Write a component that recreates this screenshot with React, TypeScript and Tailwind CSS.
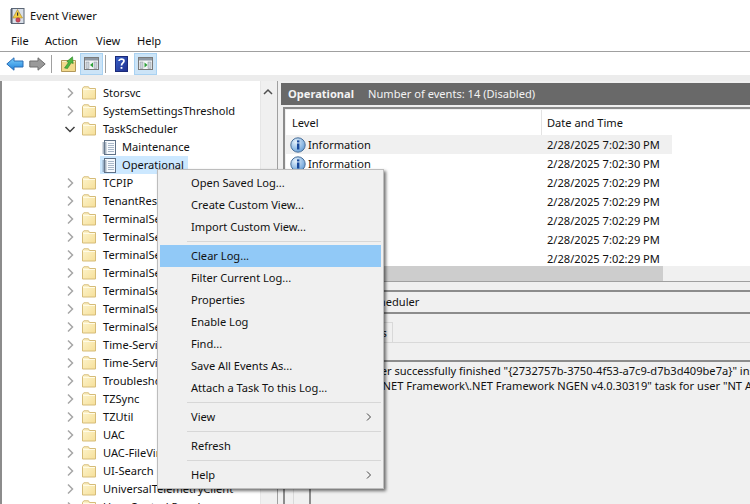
import React from "react";

const Folder = () => (
  <svg width="14" height="14" viewBox="0 0 14 14" className="shrink-0">
    <defs>
      <linearGradient id="fg" x1="0" y1="0" x2="1" y2="1">
        <stop offset="0" stopColor="#fdf5cf" />
        <stop offset="1" stopColor="#f6df98" />
      </linearGradient>
    </defs>
    <path d="M.5 2.5 V13 H13.5 V2.5 H7.5 L6.5 .8 H1.8 L.5 2.5Z" fill="url(#fg)" stroke="#d6bc78" strokeWidth="1" />
    <path d="M1 3.5 H13" stroke="#fffbe6" strokeWidth="1" />
  </svg>
);

const LogIcon = () => (
  <svg width="15" height="15" viewBox="0 0 15 15" className="shrink-0">
    <rect x="2.5" y=".5" width="11" height="14" fill="#f7fafd" stroke="#5f7187" />
    {[3, 5, 7, 9, 11, 13].map((y) => (
      <path key={y} d={`M.5 ${y} H4.5`} stroke="#6c7f94" strokeWidth="1.1" />
    ))}
    {[3, 5, 7, 9, 11].map((y) => (
      <path key={y} d={`M6 ${y + 0.5} H12`} stroke="#a9b8c9" strokeWidth="1" />
    ))}
  </svg>
);

const Info = () => (
  <svg width="16" height="16" viewBox="0 0 16 16" className="shrink-0">
    <defs>
      <radialGradient id="ig" cx="0.35" cy="0.3" r="0.9">
        <stop offset="0" stopColor="#e6f2fc" />
        <stop offset="1" stopColor="#4d8fd0" />
      </radialGradient>
    </defs>
    <circle cx="8" cy="8" r="7.2" fill="url(#ig)" stroke="#4a6f99" />
    <rect x="7" y="6.5" width="2.4" height="6" fill="#17479a" />
    <rect x="7" y="3.4" width="2.4" height="2" fill="#17479a" />
  </svg>
);

const ChevronRight = () => (
  <svg width="12" height="12" viewBox="0 0 12 12" className="shrink-0">
    <path d="M4 1.5 L8.5 6 L4 10.5" fill="none" stroke="#a6a6a6" strokeWidth="1.5" />
  </svg>
);

const MenuChevron = () => (
  <svg width="12" height="12" viewBox="0 0 12 12" className="shrink-0">
    <path d="M4 2.5 L7.5 6 L4 9.5" fill="none" stroke="#444" strokeWidth="1" />
  </svg>
);

const ChevronDown = () => (
  <svg width="12" height="12" viewBox="0 0 12 12" className="shrink-0">
    <path d="M1.5 4 L6 8.5 L10.5 4" fill="none" stroke="#404040" strokeWidth="1.5" />
  </svg>
);

const AppIcon = () => (
  <svg width="15" height="16" viewBox="0 0 15 16" className="shrink-0">
    <rect x="1.5" y=".5" width="12.5" height="15" fill="#d9dfe8" stroke="#5b6675" />
    {[2, 4, 6, 8, 10, 12, 14].map((y) => (
      <path key={y} d={`M0 ${y} H3`} stroke="#50596a" />
    ))}
    <path d="M7.5 1.5 L12.5 10 H2.8Z" fill="#f5cf45" stroke="#a8842a" strokeWidth=".6" />
    <rect x="7" y="4.5" width="1.2" height="3.2" fill="#333" />
    <circle cx="8" cy="12" r="2.2" fill="#d04a5a" stroke="#8c2b38" strokeWidth=".5" />
  </svg>
);

const BackArrow = () => (
  <svg width="18" height="14" viewBox="0 0 18 14">
    <defs>
      <linearGradient id="ba" x1="0" y1="0" x2="0" y2="1">
        <stop offset="0" stopColor="#7fd0fb" />
        <stop offset="1" stopColor="#1c7fdb" />
      </linearGradient>
    </defs>
    <path d="M.8 7 L8 .8 V4 H17 V10 H8 V13.2Z" fill="url(#ba)" stroke="#2a6cb5" />
  </svg>
);

const ForwardArrow = () => (
  <svg width="17" height="14" viewBox="0 0 17 14">
    <path d="M16.2 7 L9 .8 V4 H.8 V10 H9 V13.2Z" fill="#9a9a9a" stroke="#6f6f6f" />
  </svg>
);

const UpFolder = () => (
  <svg width="15" height="16" viewBox="0 0 15 16">
    <path d="M.5 4.5 H14.5 V15.5 H.5Z" fill="#f2d98c" stroke="#b2985a" />
    <path d="M1 5.5 H14" stroke="#fbf0c4" />
    <path d="M3.5 12 L7.5 6.5 L5.8 5.5 L11.5 .8 L12.2 7.5 L10.2 6.8 L6.5 12.5Z" fill="#4cb53f" stroke="#2d8327" strokeWidth=".6" />
  </svg>
);

const PaneIcon = ({ right }: { right?: boolean }) => (
  <svg width="15" height="13" viewBox="0 0 15 13">
    <rect x=".5" y=".5" width="14" height="12" fill="#f5f7f9" stroke="#7a7a7a" />
    <rect x="1" y="1" width="13" height="2.5" fill="#8e98a3" />
    <rect x="2" y="5" width="3" height="6.5" fill="#ccd3da" stroke="#8b949d" strokeWidth=".5" />
    <rect x="10" y="5" width="3" height="6.5" fill="#ccd3da" stroke="#8b949d" strokeWidth=".5" />
    {right ? <path d="M6.5 5.5 L9.5 8 L6.5 10.5Z" fill="#2fa13a" /> : <path d="M9 5.5 L6 8 L9 10.5Z" fill="#2fa13a" />}
  </svg>
);

const HelpIcon = () => (
  <svg width="13" height="16" viewBox="0 0 13 16">
    <defs>
      <linearGradient id="hg" x1="0" y1="0" x2="1" y2="1">
        <stop offset="0" stopColor="#3a62c9" />
        <stop offset="1" stopColor="#1f2f8e" />
      </linearGradient>
    </defs>
    <rect x=".5" y=".5" width="12" height="15" fill="url(#hg)" stroke="#1b2a78" />
    <path d="M4 5 C4 2.5 9 2.5 9 5 C9 7 6.5 7 6.5 9.5" fill="none" stroke="#fff" strokeWidth="1.7" />
    <rect x="5.6" y="11" width="1.8" height="1.8" fill="#fff" />
  </svg>
);

type Node = { label: string; kind?: "open" | "log" | "selected" };

const nodes: Node[] = [
  { label: "Storsvc" },
  { label: "SystemSettingsThreshold" },
  { label: "TaskScheduler", kind: "open" },
  { label: "Maintenance", kind: "log" },
  { label: "Operational", kind: "selected" },
  { label: "TCPIP" },
  { label: "TenantRestrictions" },
  { label: "TerminalServices-ClientUSBDevices" },
  { label: "TerminalServices-LocalSessionManager" },
  { label: "TerminalServices-PnPDevices" },
  { label: "TerminalServices-Printers" },
  { label: "TerminalServices-RemoteConnectionManager" },
  { label: "TerminalServices-ServerUSBDevices" },
  { label: "TerminalServices-SessionBroker" },
  { label: "Time-Service" },
  { label: "Time-Service-PTP-Provider" },
  { label: "Troubleshooting-Recommended" },
  { label: "TZSync" },
  { label: "TZUtil" },
  { label: "UAC" },
  { label: "UAC-FileVirtualization" },
  { label: "UI-Search" },
  { label: "UniversalTelemetryClient" },
  { label: "User Control Panel" },
];

const TreeRow = ({ node }: { node: Node }) => {
  if (node.kind === "log" || node.kind === "selected") {
    return (
      <div className="h-[18px] flex items-center pl-[98px]">
        <div className={`h-[18px] flex items-center pl-[2px] pr-[4px] ${node.kind === "selected" ? "bg-[#cce8ff]" : ""}`}>
          <LogIcon />
          <span className="ml-[5px]">{node.label}</span>
        </div>
      </div>
    );
  }
  return (
    <div className="h-[18px] flex items-center pl-[62px]">
      {node.kind === "open" ? <ChevronDown /> : <ChevronRight />}
      <div className="ml-[6px]"><Folder /></div>
      <span className="ml-[7px]">{node.label}</span>
    </div>
  );
};

const rows = [
  "2/28/2025 7:02:30 PM",
  "2/28/2025 7:02:30 PM",
  "2/28/2025 7:02:29 PM",
  "2/28/2025 7:02:29 PM",
  "2/28/2025 7:02:29 PM",
  "2/28/2025 7:02:29 PM",
  "2/28/2025 7:02:29 PM",
];

type MenuEntry = { label?: string; sub?: boolean; active?: boolean };

const menu: MenuEntry[] = [
  { label: "Open Saved Log..." },
  { label: "Create Custom View..." },
  { label: "Import Custom View..." },
  {},
  { label: "Clear Log...", active: true },
  { label: "Filter Current Log..." },
  { label: "Properties" },
  { label: "Enable Log" },
  { label: "Find..." },
  { label: "Save All Events As..." },
  { label: "Attach a Task To this Log..." },
  {},
  { label: "View", sub: true },
  {},
  { label: "Refresh" },
  {},
  { label: "Help", sub: true },
];

export default function App() {
  return (
    <div className="relative w-[750px] h-[504px] overflow-hidden bg-white flex flex-col text-[11.1px] leading-[18px] text-[#111] font-['Noto_Sans',sans-serif]">
      <div className="h-[31px] shrink-0 flex items-center pl-[10px]">
        <AppIcon />
        <span className="ml-[5px]">Event Viewer</span>
      </div>

      <div className="h-[21px] shrink-0 flex items-center border-b border-[#a0a0a0] pl-[11px]">
        <span className="w-[34px]">File</span>
        <span className="w-[51px]">Action</span>
        <span className="w-[41px]">View</span>
        <span>Help</span>
      </div>

      <div className="h-[23px] shrink-0 flex items-center">
        <div className="ml-[6px]"><BackArrow /></div>
        <div className="ml-[5px]"><ForwardArrow /></div>
        <div className="ml-[5px] w-px h-[18px] bg-[#a0a0a0]" />
        <div className="ml-[9px]"><UpFolder /></div>
        <div className="ml-[4px] w-[23px] h-[22px] flex items-center justify-center bg-[#cce4f7] border border-[#a9d2f2]"><PaneIcon /></div>
        <div className="ml-[2px] w-px h-[18px] bg-[#a0a0a0]" />
        <div className="ml-[9px]"><HelpIcon /></div>
        <div className="ml-[6px] w-[23px] h-[22px] flex items-center justify-center bg-[#cce4f7] border border-[#a9d2f2]"><PaneIcon right /></div>
      </div>

      <div className="h-[6px] shrink-0 bg-[#ececec]" />

      <div className="flex-1 min-h-0 flex">
        <div className="w-[2px] shrink-0 bg-[#8c8c8c]" />
        <div className="w-[258px] shrink-0 pt-[3px] overflow-hidden whitespace-nowrap">
          {nodes.map((n) => <TreeRow key={n.label} node={n} />)}
        </div>
        <div className="w-[17px] shrink-0 bg-[#f0f0f0] border-l border-[#e6e6e6] flex justify-center pt-[6px] pr-[2px]">
          <svg width="10" height="10" viewBox="0 0 10 10"><path d="M1 7 L5 3 L9 7" fill="none" stroke="#505050" strokeWidth="1.5" /></svg>
        </div>
        <div className="w-[4px] shrink-0 bg-[#f0f0f0] border-l border-[#a0a0a0]" />

        <div className="flex-1 min-w-0 flex flex-col bg-[#f0f0f0]">
          <div className="mt-[2px] h-[22px] shrink-0 bg-[#696969] text-[#f3f3f3] flex items-center pl-[7px] whitespace-nowrap">
            <span className="font-bold">Operational</span>
            <span className="ml-[14px]">Number of events: 14 (Disabled)</span>
          </div>

          <div className="mt-[2px] ml-[2px] flex-1 min-h-0 flex flex-col border-t-2 border-l-2 border-[#8c8c8c]">
            <div className="h-[172px] shrink-0 pl-px pt-px flex flex-col">
              <div className="h-[156px] shrink-0 bg-white overflow-hidden flex flex-col">
                <div className="h-[25px] shrink-0 flex items-center">
                  <span className="pl-[6px] w-[256px] shrink-0 border-r border-[#e3e3e3] leading-[25px]">Level</span>
                  <span className="pl-[5px]">Date and Time</span>
                </div>
                {rows.map((d, i) => (
                  <div key={i} className={`h-[19px] shrink-0 flex items-center w-[386px] ${i === 0 ? "bg-[#f0f0f0]" : ""}`}>
                    <div className="w-[256px] shrink-0 pl-[4px] flex items-center">
                      <Info />
                      <span className="ml-[2px]">Information</span>
                    </div>
                    <span className="pl-[5px]">{d}</span>
                  </div>
                ))}
              </div>
              <div className="h-[15px] shrink-0 bg-[#f0f0f0]">
                <div className="h-[15px] w-[377px] bg-[#cdcdcd]" />
              </div>
            </div>

            <div className="h-[11px] shrink-0 border-t border-[#a0a0a0] border-b-2 border-b-[#8c8c8c]" />

            <div className="h-[22px] shrink-0 pl-[3px] flex items-center border-b-2 border-[#8c8c8c] whitespace-nowrap">Event 102: TaskScheduler</div>

            <div className="flex-1 min-h-0 ml-[8px] border-l border-[#d9d9d9] flex flex-col">
              <div className="h-[29px] shrink-0 border-b border-[#d9d9d9] flex items-end">
                <div className="h-[20px] w-[52px] border-r border-[#d9d9d9] bg-white flex items-center justify-center">General</div>
                <div className="h-[20px] w-[47px] border-t border-r border-[#d9d9d9] flex items-center justify-center">Details</div>
              </div>

              <div className="flex-1 min-h-0 mt-[17px] ml-[15px] border-t-2 border-l-2 border-[#8c8c8c] pl-[3px] pt-px leading-[15px] whitespace-nowrap overflow-hidden">
                <div>Task Scheduler successfully finished "{"{"}2732757b-3750-4f53-a7c9-d7b3d409be7a{"}"}" instance of the "\Microsoft</div>
                <div className="pl-[10px]">\Windows\.NET Framework\.NET Framework NGEN v4.0.30319" task for user "NT AUTHORITY\SYSTEM".</div>
              </div>
            </div>
          </div>
        </div>
      </div>

      <div className="absolute left-[157px] top-[169px] w-[227px] h-[320px] bg-[#f0f0f0] border border-[#bdbdbd] p-[2px] shadow-[2px_2px_3px_rgba(0,0,0,0.55)]">
        {menu.map((m, i) =>
          m.label ? (
            <div key={i} className={`h-[22px] flex items-center pl-[31px] pr-[6px] justify-between ${m.active ? "bg-[#91c9f7]" : ""}`}>
              <span>{m.label}</span>
              {m.sub && <MenuChevron />}
            </div>
          ) : (
            <div key={i} className="h-[7px] pl-[27px] flex items-center">
              <div className="h-px w-full bg-[#d7d7d7]" />
            </div>
          )
        )}
      </div>
    </div>
  );
}
